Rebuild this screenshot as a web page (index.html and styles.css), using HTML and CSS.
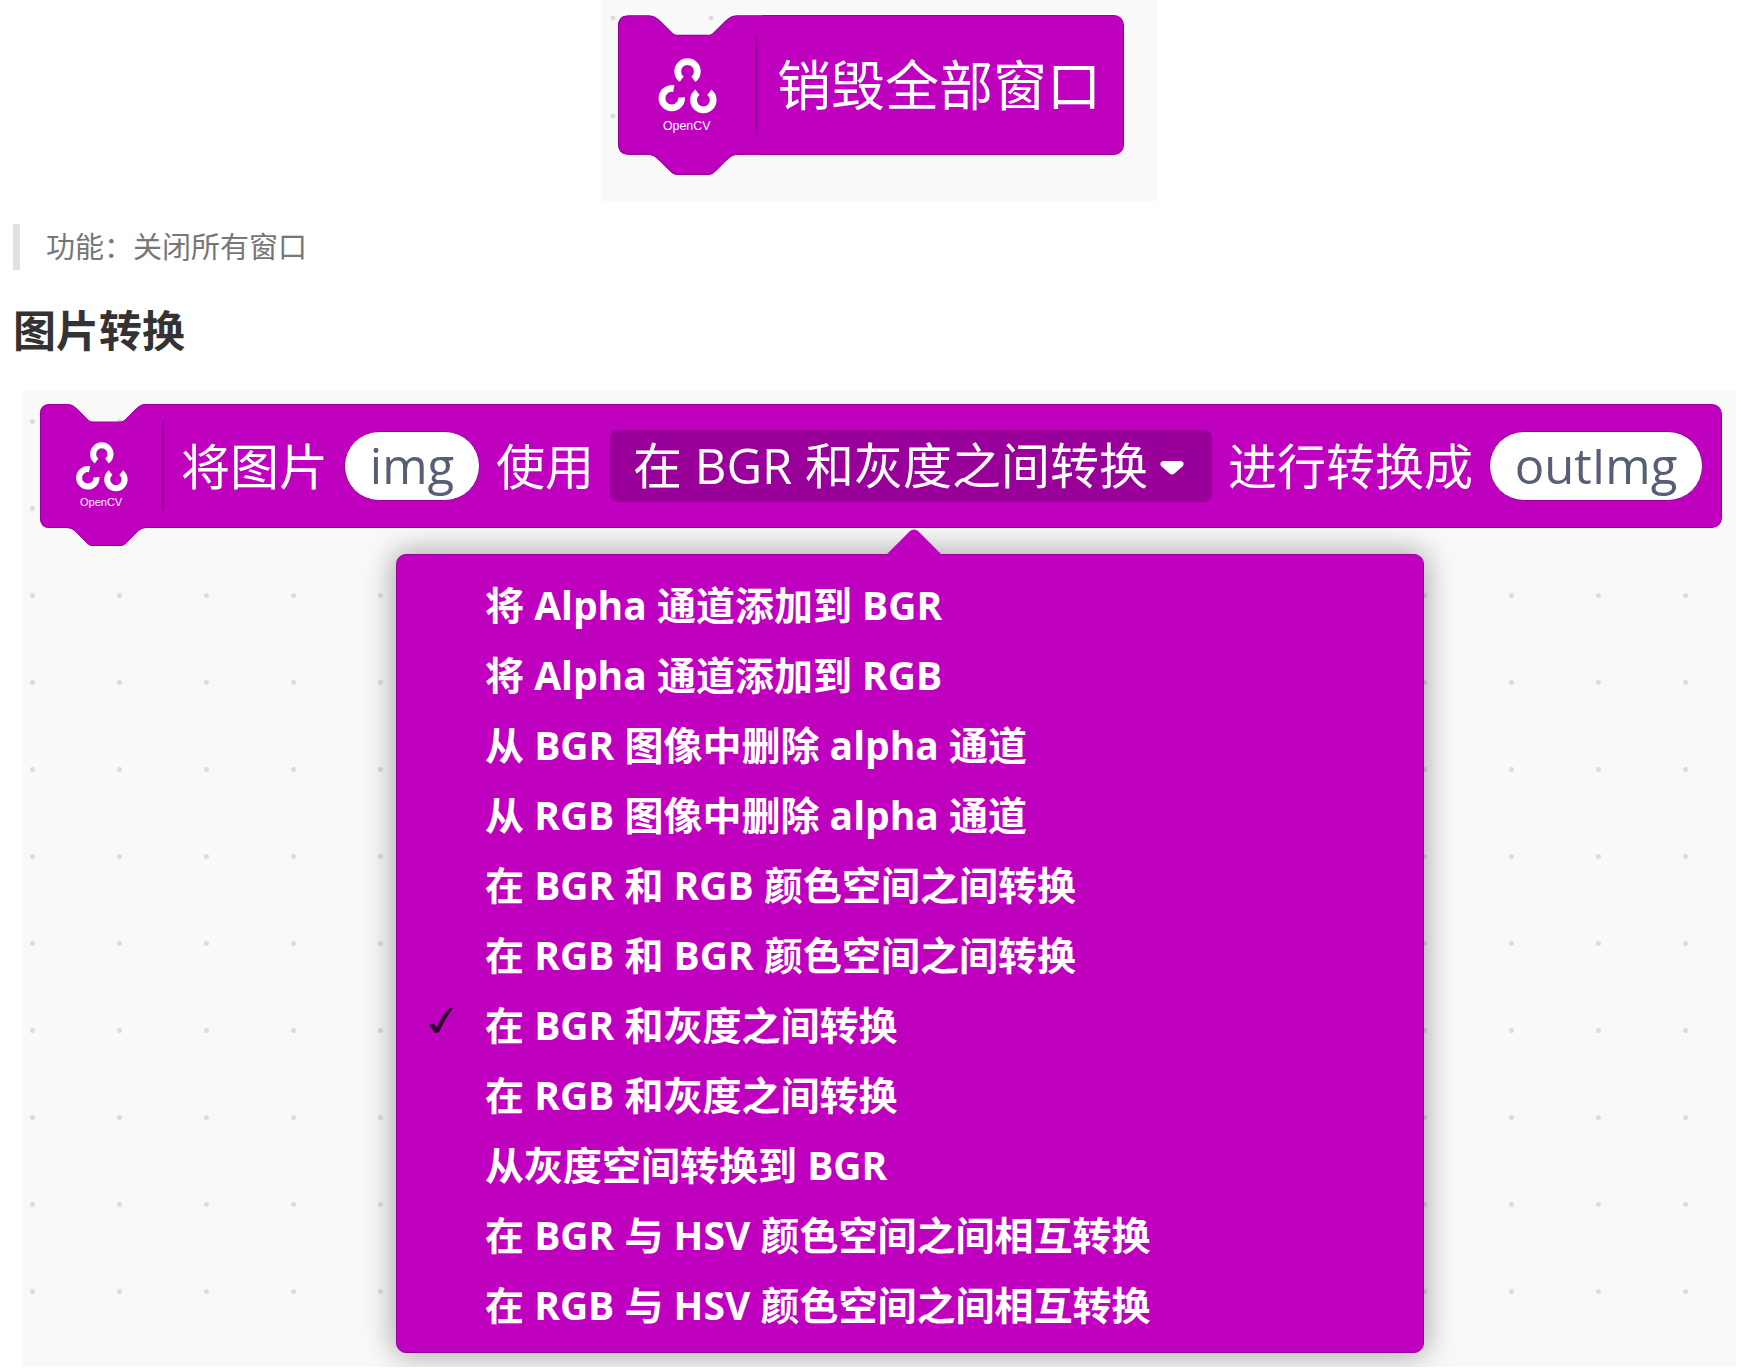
FILE: index.html
```html
<!DOCTYPE html>
<html lang="zh-CN">
<head>
    <meta charset="UTF-8">
    <meta name="viewport" content="width=device-width, initial-scale=1.0">
    <title>图片转换</title>
    <link rel="stylesheet" href="styles.css">
</head>
<body>
    <!-- Left end of a block: notch, tab, OpenCV logo and separator -->
    <svg class="defs" aria-hidden="true">
        <symbol id="block-cap" viewBox="0 0 128 142">
            <path class="cap-fill" d="M128 0H106C101 0 98 3 95 6L87 14C84 17 83 18 79 18H54C50 18 49 17 46 14L38 6C35 3 32 0 27 0H10Q0 0 0 10V114Q0 124 10 124H27C32 124 35 127 38 130L46 138C49 141 50 142 54 142H79C83 142 84 141 87 138L95 130C98 127 101 124 106 124H128Z"/>
            <path class="cap-line" d="M128 .5H106C101 .5 98 3 95 6L87 14C84 17 83 18 79 18H54C50 18 49 17 46 14L38 6C35 3 32 .5 27 .5H10Q.5 .5 .5 10V114Q.5 123.5 10 123.5H27C32 123.5 35 127 38 130L46 138C49 141 50 141.5 54 141.5H79C83 141.5 84 141 87 138L95 130C98 127 101 123.5 106 123.5H128"/>
            <path class="cap-separator" d="M123 18V107"/>
            <g class="cap-logo">
                <path d="M56.6 57A8.7 8.7 0 1 1 67 57"/>
                <path d="M49.6 65.3A8.7 8.7 0 1 0 56.5 73.2"/>
                <path d="M70.6 68.6A8.7 8.7 0 1 0 81.2 68.6"/>
            </g>
        </symbol>
    </svg>

    <main class="article">
        <div class="canvas-row">
            <div class="canvas canvas-small">
                <div class="block block-large">
                    <svg class="block-cap" viewBox="0 0 128 142"><use href="#block-cap"/><text class="cap-text" x="40" y="102">OpenCV</text></svg>
                    <div class="block-body"><span class="block-text">销毁全部窗口</span></div>
                </div>
            </div>
        </div>

        <blockquote>功能：关闭所有窗口</blockquote>

        <h2>图片转换</h2>

        <div class="canvas-row">
            <div class="canvas canvas-wide">
                <div class="block">
                    <svg class="block-cap" viewBox="0 0 128 142"><use href="#block-cap"/><text class="cap-text" x="40" y="102">OpenCV</text></svg>
                    <div class="block-body">
                        <label class="block-text" for="source">将图片</label>
                        <input class="pill" id="source" type="text" value="img">
                        <label class="block-text" for="mode">使用</label>
                        <div class="dropdown">
                            <select id="mode">
                                <option>将 Alpha 通道添加到 BGR</option>
                                <option>将 Alpha 通道添加到 RGB</option>
                                <option>从 BGR 图像中删除 alpha 通道</option>
                                <option>从 RGB 图像中删除 alpha 通道</option>
                                <option>在 BGR 和 RGB 颜色空间之间转换</option>
                                <option>在 RGB 和 BGR 颜色空间之间转换</option>
                                <option selected>在 BGR 和灰度之间转换</option>
                                <option>在 RGB 和灰度之间转换</option>
                                <option>从灰度空间转换到 BGR</option>
                                <option>在 BGR 与 HSV 颜色空间之间相互转换</option>
                                <option>在 RGB 与 HSV 颜色空间之间相互转换</option>
                            </select>
                            <svg class="caret" viewBox="0 0 24 14" aria-hidden="true"><path d="M3 0H21Q25 1 23 5L15 12Q12 15 9 12L1 5Q-1 1 3 0Z"/></svg>
                        </div>
                        <label class="block-text" for="target">进行转换成</label>
                        <input class="pill pill-wide" id="target" type="text" value="outImg">
                    </div>
                </div>

                <div class="menu">
                    <svg class="menu-arrow" viewBox="0 0 58 27" aria-hidden="true"><path d="M0 27L25 2Q29-1 33 2L58 27Z"/></svg>
                    <ul>
                        <li><button type="button">将 Alpha 通道添加到 BGR</button></li>
                        <li><button type="button">将 Alpha 通道添加到 RGB</button></li>
                        <li><button type="button">从 BGR 图像中删除 alpha 通道</button></li>
                        <li><button type="button">从 RGB 图像中删除 alpha 通道</button></li>
                        <li><button type="button">在 BGR 和 RGB 颜色空间之间转换</button></li>
                        <li><button type="button">在 RGB 和 BGR 颜色空间之间转换</button></li>
                        <li>
                            <svg class="check" viewBox="0 0 24 26" aria-hidden="true"><path d="M0 18Q3 16 5 17Q7 19 8 21Q12 9 21 1Q23 0 24 1Q16 12 10 25Q7 27 5 25Q3 21 0 18Z"/></svg>
                            <button type="button" aria-pressed="true">在 BGR 和灰度之间转换</button>
                        </li>
                        <li><button type="button">在 RGB 和灰度之间转换</button></li>
                        <li><button type="button">从灰度空间转换到 BGR</button></li>
                        <li><button type="button">在 BGR 与 HSV 颜色空间之间相互转换</button></li>
                        <li><button type="button">在 RGB 与 HSV 颜色空间之间相互转换</button></li>
                    </ul>
                </div>
            </div>
        </div>
    </main>
</body>
</html>
```

FILE: styles.css
```css
:root {
    --block: #bf00bf;
    --block-dark: #990099;
    --canvas: #f9f9f9;
    --dot: #dcdcdc;
}
* {
    box-sizing: border-box;
}
body {
    margin: 0;
    background: #fff;
    color: #333;
    font-family: "Open Sans", "Noto Sans CJK SC", sans-serif;
}
button, input, select {
    font: inherit;
    border: none;
    cursor: pointer;
}
.defs {
    position: absolute;
    width: 0;
    height: 0;
}
.article {
    padding: 0 5px 5px 13px;
}

/* text */
blockquote {
    margin: 23px 0 0;
    padding-left: 26px;
    border-left: 7px solid #dfe2e5;
    color: #777;
    font-size: 29px;
    line-height: 46px;
}
h2 {
    margin: 31px 0 29px;
    font-size: 43px;
    line-height: 60px;
}

/* dotted workspace */
.canvas-row {
    display: flex;
    justify-content: center;
    padding-left: 9px;
}
.canvas {
    overflow: hidden;
    background-color: var(--canvas);
    background-image: radial-gradient(circle, var(--dot) 2px, transparent 3px);
}
.canvas-small {
    padding: 15px 33px 26px 17px;
    background-size: 98px 98px;
    background-position: -37px -31px;
}
.canvas-wide {
    flex: 1;
    padding: 14px 14px 14px 18px;
    background-size: 87px 87px;
    background-position: -33px -12px;
}

/* blocks */
.block {
    display: flex;
    align-items: flex-start;
    color: #fff;
    font-size: 49px;
}
.block-cap {
    flex: none;
    width: 128px;
    height: 142px;
}
.block-body {
    flex: 1;
    display: flex;
    align-items: center;
    gap: 16px;
    height: 124px;
    padding: 0 18px 0 13px;
    background: var(--block);
    border: 1px solid var(--block-dark);
    border-left: none;
    border-radius: 0 10px 10px 0;
    white-space: nowrap;
}
.block-text {
    padding-bottom: 6px;
}
.block-large {
    font-size: 54px;
}
.block-large .block-cap {
    width: 144px;
    height: 160px;
}
.block-large .block-body {
    height: 140px;
    padding: 0 22px 0 15px;
}
.cap-fill {
    fill: var(--block);
}
.cap-line {
    fill: none;
    stroke: var(--block-dark);
}
.cap-separator {
    stroke: var(--block-dark);
    stroke-width: 2;
}
.cap-logo {
    fill: none;
    stroke: #fff;
    stroke-width: 6;
}
.cap-text {
    fill: #fff;
    font-family: "Liberation Sans", sans-serif;
    font-size: 11px;
}

/* fields */
.pill {
    width: 136px;
    height: 70px;
    padding: 0 0 3px;
    border: 1px solid var(--block-dark);
    border-radius: 35px;
    background: #fff;
    color: #575e75;
    text-align: center;
}
.pill-wide {
    width: 214px;
}
.dropdown {
    position: relative;
    flex: 1;
    min-width: 0;
}
.dropdown select {
    display: block;
    width: 100%;
    height: 72px;
    padding: 0 60px 2px 23px;
    appearance: none;
    border-radius: 8px;
    background: var(--block-dark);
    color: #fff;
}
.caret {
    position: absolute;
    top: 31px;
    right: 28px;
    width: 24px;
    height: 14px;
    fill: #fff;
    pointer-events: none;
}

/* open menu */
.menu {
    position: relative;
    max-width: 1028px;
    margin: 8px 0 0 356px;
    padding: 16px 0 11px;
    background: var(--block);
    border: 1px solid var(--block-dark);
    border-radius: 10px;
    box-shadow: 0 0 30px 2px rgba(0, 0, 0, 0.35);
}
.menu-arrow {
    position: absolute;
    top: -26px;
    left: 50%;
    width: 58px;
    height: 27px;
    margin-left: -25px;
    fill: var(--block);
}
.menu ul {
    margin: 0;
    padding: 0;
    list-style: none;
}
.menu li {
    position: relative;
}
.menu button {
    display: block;
    width: 100%;
    height: 70px;
    padding: 0 0 6px 88px;
    background: none;
    color: #fff;
    font-size: 39px;
    font-weight: bold;
    text-align: left;
}
.check {
    position: absolute;
    top: 16px;
    left: 32px;
    width: 24px;
    height: 26px;
    fill: #2b0030;
}
```
